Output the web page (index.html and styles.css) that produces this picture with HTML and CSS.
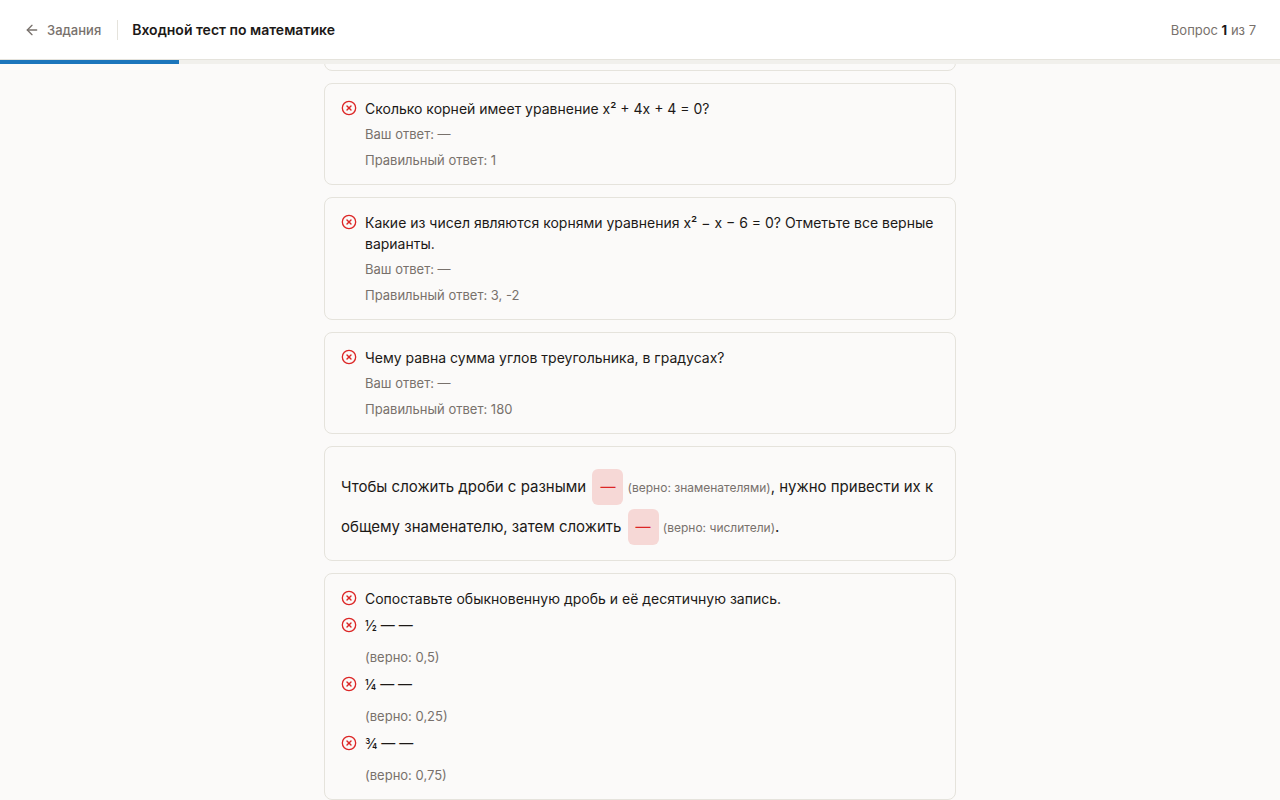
FILE: index.html
```html
<!DOCTYPE html>
<html lang="ru">
<head>
  <meta charset="UTF-8">
  <meta name="viewport" content="width=device-width, initial-scale=1.0">
  <title>Входной тест по математике</title>
  <link rel="stylesheet" href="styles.css">
</head>
<body>

  <svg class="sprite" aria-hidden="true">
    <symbol id="icon-wrong" viewBox="0 0 24 24">
      <circle cx="12" cy="12" r="10"/>
      <path d="m15 9-6 6"/>
      <path d="m9 9 6 6"/>
    </symbol>
  </svg>

  <header class="topbar">
    <a class="back" href="#">
      <svg class="icon" viewBox="0 0 24 24"><path d="m12 19-7-7 7-7"/><path d="M19 12H5"/></svg>
      Задания
    </a>
    <h1 class="topbar-title">Входной тест по математике</h1>
    <p class="counter">Вопрос <strong>1</strong> из 7</p>
  </header>

  <div class="progress">
    <div class="progress-fill" style="width: 14%"></div>
  </div>

  <main class="content">
    <div class="results">
      <section class="card"></section>

      <section class="card question">
        <svg class="icon icon-wrong"><use href="#icon-wrong"/></svg>
        <div class="question-body">
          <p class="question-text">Сколько корней имеет уравнение x² + 4x + 4 = 0?</p>
          <p class="answer">Ваш ответ: —</p>
          <p class="answer">Правильный ответ: 1</p>
        </div>
      </section>

      <section class="card question">
        <svg class="icon icon-wrong"><use href="#icon-wrong"/></svg>
        <div class="question-body">
          <p class="question-text">Какие из чисел являются корнями уравнения x² − x − 6 = 0? Отметьте все верные варианты.</p>
          <p class="answer">Ваш ответ: —</p>
          <p class="answer">Правильный ответ: 3, -2</p>
        </div>
      </section>

      <section class="card question">
        <svg class="icon icon-wrong"><use href="#icon-wrong"/></svg>
        <div class="question-body">
          <p class="question-text">Чему равна сумма углов треугольника, в градусах?</p>
          <p class="answer">Ваш ответ: —</p>
          <p class="answer">Правильный ответ: 180</p>
        </div>
      </section>

      <section class="card">
        <p class="cloze">Чтобы сложить дроби с разными <span class="blank">—</span> <span class="hint">(верно: знаменателями)</span>, нужно привести их к общему знаменателю, затем сложить <span class="blank">—</span> <span class="hint">(верно: числители)</span>.</p>
      </section>

      <section class="card matching">
        <div class="question">
          <svg class="icon icon-wrong"><use href="#icon-wrong"/></svg>
          <p class="question-text">Сопоставьте обыкновенную дробь и её десятичную запись.</p>
        </div>
        <div class="question">
          <svg class="icon icon-wrong"><use href="#icon-wrong"/></svg>
          <div class="pair">
            <p class="pair-text">½ — —</p>
            <p class="answer">(верно: 0,5)</p>
          </div>
        </div>
        <div class="question">
          <svg class="icon icon-wrong"><use href="#icon-wrong"/></svg>
          <div class="pair">
            <p class="pair-text">¼ — —</p>
            <p class="answer">(верно: 0,25)</p>
          </div>
        </div>
        <div class="question">
          <svg class="icon icon-wrong"><use href="#icon-wrong"/></svg>
          <div class="pair">
            <p class="pair-text">¾ — —</p>
            <p class="answer">(верно: 0,75)</p>
          </div>
        </div>
      </section>
    </div>
  </main>

</body>
</html>
```
FILE: styles.css
```css
:root {
  --bg: #fbfaf9;
  --surface: #ffffff;
  --border: #e5e3dc;
  --track: #f1f0ec;
  --text: #1c1917;
  --muted: #78716c;
  --accent: #1b75bb;
  --danger: #dc2626;
  --danger-bg: #f6d8d6;
}

* {
  box-sizing: border-box;
}

body {
  margin: 0;
  height: 100vh;
  display: flex;
  flex-direction: column;
  background: var(--bg);
  color: var(--text);
  font-family: Inter, "Liberation Sans", sans-serif;
  font-size: 14px;
}

h1, p {
  margin: 0;
}

.sprite {
  display: none;
}

.icon {
  width: 16px;
  height: 16px;
  flex-shrink: 0;
  fill: none;
  stroke: currentColor;
  stroke-width: 2;
  stroke-linecap: round;
  stroke-linejoin: round;
}

/* Top bar */
.topbar {
  display: flex;
  align-items: center;
  flex-shrink: 0;
  height: 60px;
  padding: 0 24px;
  background: var(--surface);
  border-bottom: 1px solid var(--border);
}

.back {
  display: flex;
  align-items: center;
  gap: 7px;
  height: 20px;
  padding-right: 16px;
  border-right: 1px solid var(--border);
  color: var(--muted);
  font-size: 13px;
  font-weight: 500;
  text-decoration: none;
}

.topbar-title {
  margin-left: 14px;
  font-size: 14px;
  font-weight: 600;
}

.counter {
  margin-left: auto;
  color: var(--muted);
  font-size: 13px;
}

.counter strong {
  color: var(--text);
  font-weight: 700;
}

.progress {
  flex-shrink: 0;
  height: 4px;
  background: var(--track);
}

.progress-fill {
  height: 100%;
  background: var(--accent);
}

/* Results list */
.content {
  flex: 1;
  overflow-y: auto;
  scrollbar-width: none;
}

.results {
  display: flex;
  flex-direction: column;
  gap: 12px;
  max-width: 680px;
  margin: -22px auto 0;
  padding: 0 24px;
}

.card {
  padding: 14px 16px 13px;
  border: 1px solid var(--border);
  border-radius: 8px;
}

.question {
  display: flex;
  gap: 8px;
}

.icon-wrong {
  margin-top: 2px;
  color: var(--danger);
}

.question-body {
  display: grid;
  gap: 4px;
}

.question-text {
  line-height: 21px;
}

.answer {
  color: var(--muted);
  font-size: 13px;
  line-height: 22px;
}

/* Fill in the blanks */
.cloze {
  padding-top: 6px;
  font-size: 15px;
  line-height: 40px;
}

.blank {
  display: inline-block;
  margin-left: 2px;
  padding: 0 8px;
  border-radius: 6px;
  background: var(--danger-bg);
  color: var(--danger);
  line-height: 36px;
}

.hint {
  color: var(--muted);
  font-size: 12px;
  line-height: 20px;
}

/* Matching */
.matching {
  display: grid;
  gap: 6px;
}

.pair {
  display: grid;
  gap: 9px;
}

.pair-text {
  line-height: 22px;
}
```
